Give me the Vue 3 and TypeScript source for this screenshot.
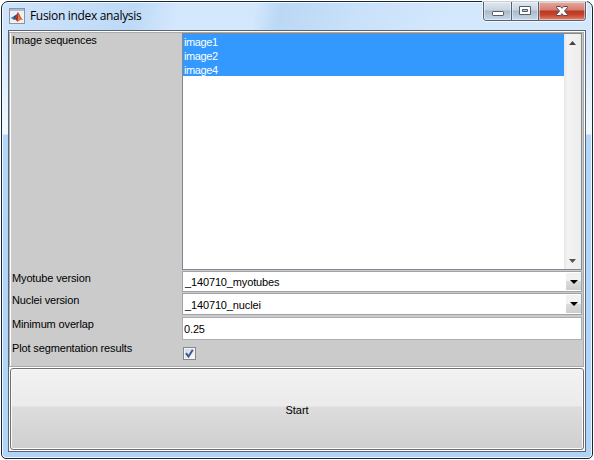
<script setup lang="ts">
import { ref } from 'vue'

const images = ref<string[]>(['image1', 'image2', 'image4'])
const myotube = ref('_140710_myotubes')
const nuclei = ref('_140710_nuclei')
const overlap = ref('0.25')
const plot = ref(true)
</script>

<template>
  <div class="desktop">
    <main class="window">
      <header class="titlebar">
        <svg class="logo" width="16" height="16" viewBox="0 0 16 16">
          <rect x=".5" y=".5" width="15" height="15" fill="#eff1f4" stroke="#8d949e" />
          <path d="M1 1h14v2H1z" fill="#a9bdd8" />
          <path d="M1.500 10 5 8l1.500 1.600L4.200 11.600z" fill="#3f8fc6" />
          <path d="M5 8 7.500 6.400 9 4 8.300 9 6.500 11.400 4.200 11.600z" fill="#24508e" />
          <path d="M8.800 4C10.400 5 11.400 9 14 12c-1.800-.9-2.500-.8-3.400.3L8.600 14C7.900 12.400 6.600 11.600 4.800 11.700 7.200 10.400 8 7 8.800 4z" fill="#d9532a" />
          <path d="M8.800 4.200 8.800 10l-.8 3-1.300-1.700C8 9.400 8.300 7 8.800 4.200z" fill="#8d2a2c" />
          <path d="M9.700 6.400 10.700 10.500 9.200 13z" fill="#f3a14b" />
        </svg>
        <h1>Fusion index analysis</h1>
        <div class="controls">
          <button class="ctl min" aria-label="Minimize">
            <svg width="14" height="13" viewBox="0 0 14 13"><rect x="1.5" y="6.5" width="11" height="4" rx=".6" fill="#fff" stroke="#555c69" /></svg>
          </button>
          <button class="ctl max" aria-label="Maximize">
            <svg width="14" height="13" viewBox="0 0 14 13"><path d="M1.500 1.500h11v8h-11zM4.500 4.500v2h5v-2z" fill="#fff" fill-rule="evenodd" stroke="#555c69" /></svg>
          </button>
          <button class="ctl close" aria-label="Close">
            <svg width="14" height="13" viewBox="0 0 14 13">
              <path d="M1.500 1.500H5.300L7 3.300 8.700 1.500h3.800v1L9.500 6l3 3.500v1H8.700L7 8.700 5.300 10.500H1.500v-1L4.500 6l-3-3.500z" fill="#fff" stroke="#5b4650" />
            </svg>
          </button>
        </div>
      </header>

      <section class="client">
        <div class="form">
          <label class="name">Image sequences</label>
          <div class="list">
            <ul>
              <li v-for="image in images" :key="image">{{ image }}</li>
            </ul>
            <div class="scroll">
              <svg width="7" height="4" viewBox="0 0 7 4"><path d="M0 4 3.500 0 7 4z" fill="#444" /></svg>
              <svg width="7" height="4" viewBox="0 0 7 4"><path d="M0 0 3.500 4 7 0z" fill="#555" /></svg>
            </div>
          </div>

          <label class="name">Myotube version</label>
          <div class="combo">
            <span>{{ myotube }}</span>
            <i><svg width="8" height="4" viewBox="0 0 8 4"><path d="M0 0h8L4 4z" fill="#000" /></svg></i>
          </div>

          <label class="name">Nuclei version</label>
          <div class="combo second">
            <span>{{ nuclei }}</span>
            <i><svg width="8" height="4" viewBox="0 0 8 4"><path d="M0 0h8L4 4z" fill="#000" /></svg></i>
          </div>

          <label class="name">Minimum overlap</label>
          <div class="edit">{{ overlap }}</div>

          <label class="name">Plot segmentation results</label>
          <div class="check" role="checkbox" :aria-checked="plot" @click="plot = !plot">
            <svg v-if="plot" width="9" height="9" viewBox="0 0 9 9"><path d="M1 4.200 3.500 7.500 7.800.8" fill="none" stroke="#3e5795" stroke-width="2" /></svg>
          </div>
        </div>
        <button class="start">Start</button>
      </section>
    </main>
  </div>
</template>

<style>
body { margin: 0; background: #fff; }
</style>

<style scoped>
* { box-sizing: border-box; }
.desktop {
  width: 594px;
  height: 460px;
  padding: 1px;
  background: #fff;
  font: 11px/14px "Liberation Sans", Arial, sans-serif;
  letter-spacing: -.14px;
  color: #000;
}
.window {
  width: 592px;
  height: 458px;
  padding: 0 6px 6px;
  border: 1px solid #1c2632;
  border-radius: 7px 7px 5px 5px;
  background:
    linear-gradient(100deg, rgba(205, 226, 249, .6) 0, rgba(175, 208, 243, .6) 130px, rgba(215, 234, 252, 0) 175px, rgba(215, 234, 252, 0) 250px, rgba(170, 205, 240, .6) 275px, rgba(190, 218, 246, .5) 350px, rgba(215, 234, 252, 0) 440px) 0 0 / 100% 28px no-repeat,
    linear-gradient(#d2e7fc 0, #d6e9fd 50px, #e9f4fe 105px, #f2f8ff 132px, #b3d6fb 133px, #b0d4f8 100%);
  box-shadow: inset 0 0 0 1px #eef8ff;
}
.titlebar { display: flex; height: 28px; padding-left: 1px; }
.logo { margin: 6px 5px 0 0; }
h1 {
  margin: 6px 0 0;
  font: 12px/16px "Open Sans", "Noto Sans", sans-serif;
  letter-spacing: -.32px;
  white-space: nowrap;
}
.controls {
  display: flex;
  width: 103px;
  height: 19px;
  margin-left: auto;
  border: 1px solid #566170;
  border-top: 0;
  border-radius: 0 0 4px 4px;
  overflow: hidden;
  box-shadow: 0 0 0 1px rgba(245, 251, 255, .8);
}
.ctl {
  display: flex;
  justify-content: center;
  align-items: flex-start;
  padding: 3px 0 0;
  border: 0;
  box-shadow: inset 0 0 0 1px rgba(255, 255, 255, .45);
  background: linear-gradient(#dfe8f1 0, #c9d4df 8px, #a9b9ca 9px, #c8daea 100%);
}
.ctl svg { flex: none; }
.min { width: 28px; border-right: 1px solid #566170; }
.max { width: 27px; border-right: 1px solid #566170; }
.close { width: 46px; background: linear-gradient(#e6aaa0 0, #d47d6f 8px, #b93924 9px, #c8432c 13px, #df886f 100%); }
.client {
  height: 422px;
  padding: 1px 0 0 1px;
  border: 1px solid #596474;
  background: #fff;
}
.form {
  display: grid;
  grid-template-columns: 172px 400px;
  grid-template-rows: 238px 22px 24px 24px 26px;
  width: 575px;
  height: 335px;
  margin-left: -1px;
  border: 1px solid #aaa;
  background: #cbcbcb;
  box-shadow: inset 1px 0 0 #fff;
}
.name { padding-left: 2px; line-height: 15px; white-space: nowrap; }
.list {
  display: flex;
  height: 237px;
  border: 1px solid #828790;
  background: #fff;
}
ul {
  flex: 1;
  margin: 0;
  padding: 0;
  list-style: none;
  letter-spacing: -.4px;
  color: #fff;
}
li { height: 14px; padding-left: 1px; line-height: 16px; background: #39f; }
.scroll {
  display: flex;
  flex-direction: column;
  justify-content: space-between;
  align-items: center;
  width: 17px;
  padding: 7px 0 6px;
  background: linear-gradient(90deg, #e6e6e6, #f3f3f3 3px, #ededed);
}
.combo {
  display: flex;
  height: 21px;
  border: 1px solid #a0a2a6;
  background: #fff;
}
.combo.second { height: 22px; }
.combo span { flex: 1; padding-left: 2px; line-height: 21px; }
.combo.second span { line-height: 23px; }
.combo i {
  display: flex;
  justify-content: center;
  align-items: center;
  width: 15px;
  margin: 1px 0;
  background: linear-gradient(#f2f2f2 0 48%, #dcdcdc 49%, #cdcdcd);
}
.edit {
  height: 23px;
  padding-left: 1px;
  border: 1px solid #abadb3;
  background: #fff;
  line-height: 23px;
}
.check {
  display: flex;
  justify-content: center;
  align-items: center;
  width: 13px;
  height: 13px;
  margin: 6px 0 0 1px;
  border: 1px solid #85888c;
  background: linear-gradient(135deg, #ccd4dc, #fff);
  box-shadow: inset 0 0 0 1px #f4f4f4;
}
.start {
  display: block;
  width: 574px;
  height: 82px;
  margin-top: 1px;
  padding: 2px 0 0;
  border: 1px solid #707070;
  border-radius: 3px;
  background: linear-gradient(#f2f2f2 0, #ebebeb 37px, #dddddd 38px, #cfcfcf 100%);
  box-shadow: inset 0 0 0 1px #fbfbfb;
  font: inherit;
  color: #000;
}
</style>
